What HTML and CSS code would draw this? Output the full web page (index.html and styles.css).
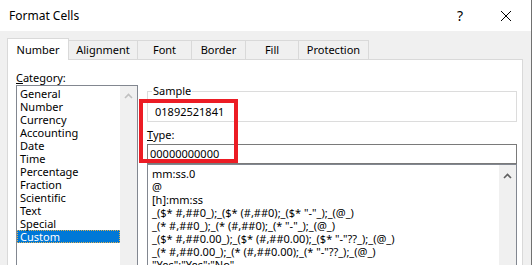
FILE: index.html
```html
<!DOCTYPE html>
<html lang="en">
<head>
  <meta charset="UTF-8">
  <meta name="viewport" content="width=device-width, initial-scale=1.0">
  <title>Format Cells</title>
  <link rel="stylesheet" href="styles.css">
</head>
<body>
  <div class="dialog">
    <div class="titlebar">
      <span class="title">Format Cells</span>
      <span class="help">?</span>
      <svg class="close" width="12" height="12" viewBox="0 0 12 12">
        <path d="M1 1 L11 11 M11 1 L1 11" stroke="#000" stroke-width="1" fill="none"/>
      </svg>
    </div>

    <div class="content">
      <div class="tabs">
        <div class="tab active" style="width: 62px">Number</div>
        <div class="tab" style="width: 70px">Alignment</div>
        <div class="tab" style="width: 55px">Font</div>
        <div class="tab" style="width: 55px">Border</div>
        <div class="tab" style="width: 54px">Fill</div>
        <div class="tab" style="width: 71px">Protection</div>
      </div>

      <div class="panel">
        <div class="category">
          <div class="label"><u>C</u>ategory:</div>
          <div class="listbox">
            <ul class="items">
              <li>General</li>
              <li>Number</li>
              <li>Currency</li>
              <li>Accounting</li>
              <li>Date</li>
              <li>Time</li>
              <li>Percentage</li>
              <li>Fraction</li>
              <li>Scientific</li>
              <li>Text</li>
              <li>Special</li>
              <li class="selected">Custom</li>
            </ul>
            <div class="scrollbar">
              <svg class="arrow light" width="9" height="6" viewBox="0 0 9 6">
                <path d="M1 5 L4.5 1.5 L8 5" stroke-width="1.6" fill="none"/>
              </svg>
            </div>
          </div>
        </div>

        <div class="details">
          <fieldset class="sample">
            <legend>Sample</legend>
            <div class="sample-value">01892521841</div>
          </fieldset>

          <div class="label type-label"><u>T</u>ype:</div>
          <div class="type-input">00000000000</div>

          <div class="listbox formats">
            <ul class="items">
              <li>mm:ss.0</li>
              <li>@</li>
              <li>[h]:mm:ss</li>
              <li>_($* #,##0_);_($* (#,##0);_($* "-"_);_(@_)</li>
              <li>_(* #,##0_);_(* (#,##0);_(* "-"_);_(@_)</li>
              <li>_($* #,##0.00_);_($* (#,##0.00);_($* "-"??_);_(@_)</li>
              <li>_(* #,##0.00_);_(* (#,##0.00);_(* "-"??_);_(@_)</li>
              <li>"Yes";"Yes";"No"</li>
            </ul>
            <div class="scrollbar">
              <svg class="arrow" width="9" height="6" viewBox="0 0 9 6">
                <path d="M1 5 L4.5 1.5 L8 5" stroke-width="1.6" fill="none"/>
              </svg>
            </div>
          </div>
        </div>

        <div class="highlight-box"></div>
      </div>
    </div>
  </div>
</body>
</html>
```

FILE: styles.css
```css
body {
  margin: 0;
  font-family: "Noto Sans", sans-serif;
  font-size: 11px;
  color: #000;
  overflow: hidden;
}

.dialog {
  width: 532px;
  height: 265px;
  box-sizing: border-box;
  border-right: 1px solid #707070;
  background-color: #f0f0f0;
  display: flex;
  flex-direction: column;
  overflow: hidden;
}

.titlebar {
  height: 31px;
  flex-shrink: 0;
  background-color: #fff;
  display: flex;
  align-items: center;
  padding-left: 9px;
  font-size: 12px;
}

.title {
  flex: 1;
}

.help {
  font-size: 14px;
  margin-right: 37px;
}

.close {
  margin-right: 19px;
}

.content {
  flex: 1;
  padding: 7px 8px 0 7px;
  display: flex;
  flex-direction: column;
}

.tabs {
  display: flex;
  align-items: flex-end;
  height: 21px;
}

.tab {
  box-sizing: border-box;
  height: 19px;
  margin-left: -1px;
  border: 1px solid #d9d9d9;
  border-bottom: none;
  background-color: #f0f0f0;
  line-height: 18px;
  text-align: center;
}

.tab.active {
  margin-left: 0;
  height: 22px;
  padding-top: 2px;
  margin-bottom: -1px;
  background-color: #fff;
  position: relative;
  z-index: 1;
}

.panel {
  flex: 1;
  position: relative;
  display: flex;
  gap: 9px;
  padding: 10px 0 0 8px;
  background-color: #fff;
  border: 1px solid #d9d9d9;
  border-bottom: none;
}

.label {
  line-height: 15px;
}

.category {
  width: 122px;
  display: flex;
  flex-direction: column;
}

.listbox {
  flex: 1;
  display: flex;
  border: 1px solid #828790;
  border-bottom: none;
}

.items {
  flex: 1;
  list-style: none;
  margin: 0;
  padding: 1px 0 0 0;
}

.items li {
  line-height: 13px;
  height: 13px;
  padding-left: 3px;
  white-space: nowrap;
}

.items li.selected {
  box-sizing: border-box;
  padding-left: 2px;
  background-color: #0078d7;
  color: #fff;
  border: 1px dotted #e0b050;
  line-height: 11px;
}

.scrollbar {
  width: 17px;
  background-color: #f0f0f0;
  display: flex;
  justify-content: center;
  padding-top: 7px;
}

.arrow {
  stroke: #606060;
}

.arrow.light {
  stroke: #c0c0c0;
}

.details {
  width: 370px;
  display: flex;
  flex-direction: column;
  padding-top: 14px;
}

.sample {
  margin: 0;
  padding: 0;
  min-inline-size: 0;
  border: 1px solid #dcdcdc;
}

.sample legend {
  margin-left: 4px;
  padding: 0 1px;
  line-height: 14px;
}

.sample-value {
  margin-top: 7px;
  padding: 0 0 2px 7px;
  line-height: 14px;
}

.type-label {
  margin-top: 6px;
  line-height: 14px;
}

.type-input {
  box-sizing: border-box;
  height: 20px;
  margin-top: 2px;
  padding-left: 2px;
  border: 1px solid #7a7a7a;
  line-height: 18px;
}

.formats {
  width: 370px;
  box-sizing: border-box;
}

.formats .items {
  padding-top: 2px;
  padding-left: 1px;
}

.formats .scrollbar {
  padding-top: 8px;
}

.highlight-box {
  position: absolute;
  left: 131px;
  top: 39px;
  width: 99px;
  height: 64px;
  box-sizing: border-box;
  border: 4px solid #ec1c24;
}
```
